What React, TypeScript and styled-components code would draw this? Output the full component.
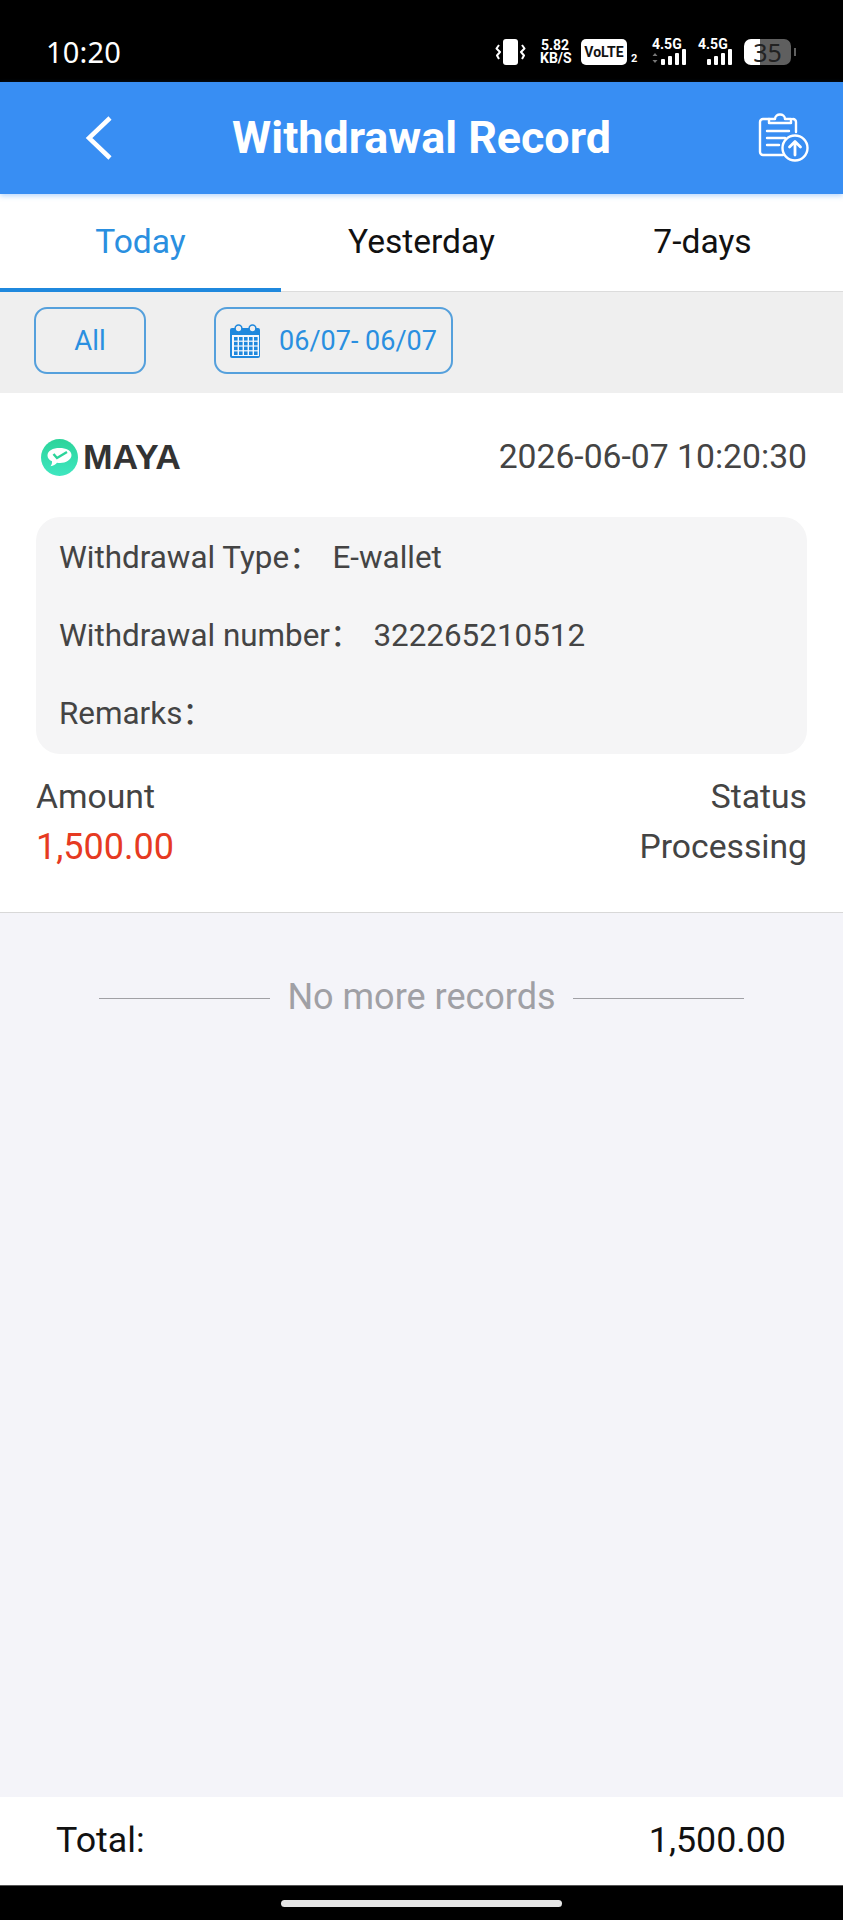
import React from "react";
import styled, { createGlobalStyle } from "styled-components";

const Global = createGlobalStyle`
  html, body { margin: 0; padding: 0; background: #000; }
  body { font-family: Roboto, "Noto Sans CJK SC", "Liberation Sans", sans-serif; }
  * { box-sizing: border-box; }
`;

const BODY_FONT = `Roboto, "Noto Sans CJK SC", sans-serif`;

const Page = styled.div`
  width: 843px;
  height: 1920px;
  display: flex;
  flex-direction: column;
  background: #f4f4f9;
  overflow: hidden;
`;

const StatusBar = styled.div`
  height: 82px;
  flex: none;
  background: #000;
  color: #fff;
  display: flex;
  align-items: flex-end;
  justify-content: space-between;
  padding: 0 52px 13px 46px;
`;
const Clock = styled.div`
  font: 400 29px/34px "Noto Sans", Roboto, sans-serif;
  letter-spacing: 0.2px;
`;
const StatusIcons = styled.div`
  display: flex;
  align-items: flex-end;
  height: 26px;
  margin-bottom: 4px;
`;
const Speed = styled.div`
  font: 700 14px/13px Roboto, sans-serif;
  text-align: center;
  width: 30px;
  margin-left: 13px;
  margin-right: 11px;
  white-space: nowrap;
`;
const Volte = styled.div`
  width: 46px;
  height: 26px;
  border-radius: 5px;
  background: #fff;
  color: #111;
  font: 700 14px/26px Roboto, sans-serif;
  text-align: center;
`;
const SimNum = styled.span`
  width: 6px;
  font: 700 11px/12px Roboto, sans-serif;
  margin: 0 15px 0 4px;
`;
const Net = styled.div`
  position: relative;
  width: 34px;
  height: 26px;
  margin-right: 12px;
`;
const NetLabel = styled.span`
  position: absolute;
  left: 0;
  top: -1px;
  font: 700 14px/13px Roboto, sans-serif;
`;
const Battery = styled.div`
  position: relative;
  width: 47px;
  height: 26px;
  border-radius: 7px;
  background: linear-gradient(90deg, #fff 0 35%, #5f5f5f 35% 100%);
  color: #222;
  font: 400 25px/26px "Noto Sans", Roboto, sans-serif;
  text-align: center;
  &::after {
    content: "";
    position: absolute;
    right: -5px;
    top: 9px;
    width: 2px;
    height: 8px;
    background: #5f5f5f;
  }
`;

const Header = styled.header`
  height: 112px;
  flex: none;
  background: #388ef3;
  color: #fff;
  display: grid;
  grid-template-columns: 1fr auto 1fr;
  align-items: center;
  padding: 0 34px;
  box-shadow: 0 2px 5px rgba(56, 142, 243, 0.35);
  position: relative;
`;
const Title = styled.h1`
  margin: 0;
  font: 700 44.8px/48px Roboto, sans-serif;
`;
const HeaderAction = styled.div`
  display: flex;
  justify-content: flex-end;
`;
const HeaderBack = styled.div`
  display: flex;
  justify-content: flex-start;
  padding-left: 50px;
`;

const Tabs = styled.nav`
  height: 98px;
  flex: none;
  background: #fff;
  display: grid;
  grid-template-columns: repeat(3, 1fr);
  border-bottom: 1px solid #dcdcdc;
`;
const Tab = styled.div<{ $active?: boolean }>`
  display: flex;
  align-items: center;
  justify-content: center;
  font: 400 33.6px/40px Roboto, sans-serif;
  color: ${(p) => (p.$active ? "#2a8fe0" : "#111")};
  height: 98px;
  padding-top: 2px;
  border-bottom: 4px solid ${(p) => (p.$active ? "#1f88dd" : "transparent")};
`;

const FilterBar = styled.div`
  height: 101px;
  flex: none;
  background: #efefef;
  display: flex;
  align-items: center;
  gap: 68px;
  padding: 0 0 4px 34px;
`;
const FilterButton = styled.div<{ $wide?: boolean }>`
  height: 67px;
  width: ${(p) => (p.$wide ? "239px" : "112px")};
  border: 2px solid #55a0dc;
  border-radius: 13px;
  color: #2a8fe0;
  font: 400 ${(p) => (p.$wide ? 27 : 27.5)}px/34px Roboto, sans-serif;
  display: flex;
  align-items: center;
  justify-content: center;
  gap: 18px;
`;

const Card = styled.section`
  height: 520px;
  flex: none;
  background: #fff;
  border-bottom: 1px solid #d8d8d8;
  padding: 40px 36px 0;
`;
const CardHead = styled.div`
  display: flex;
  align-items: center;
  justify-content: space-between;
  height: 48px;
  padding-left: 5px;
`;
const Brand = styled.div`
  display: flex;
  align-items: center;
  gap: 5px;
  font: 700 35.5px/40px "Liberation Sans", sans-serif;
  color: #333;
`;
const Stamp = styled.div`
  font: 400 33.7px/40px Roboto, sans-serif;
  color: #444;
`;
const InfoBox = styled.div`
  margin-top: 36px;
  height: 237px;
  background: #f5f5f6;
  border-radius: 24px;
  padding: 2px 23px 0;
`;
const InfoLine = styled.div`
  height: 78px;
  display: flex;
  align-items: center;
  font: 400 31.4px/40px ${BODY_FONT};
  color: #444;
`;
const InfoValue = styled.span`
  margin-left: 12px;
`;
const Summary = styled.div`
  display: grid;
  grid-template-columns: 1fr 1fr;
  margin-top: 23px;
  row-gap: 10px;
`;
const SummaryCell = styled.div<{ $end?: boolean; $tone?: string; $size?: number }>`
  font: 400 ${(p) => p.$size || 33.7}px/40px Roboto, sans-serif;
  color: ${(p) => p.$tone || "#444"};
  text-align: ${(p) => (p.$end ? "right" : "left")};
`;

const Content = styled.main`
  flex: 1;
  padding-top: 64px;
`;
const EndNote = styled.div`
  display: flex;
  align-items: center;
  justify-content: center;
  gap: 17px;
  color: #a0a0a5;
  font: 400 36px/40px Roboto, sans-serif;
  &::before,
  &::after {
    content: "";
    width: 171px;
    height: 1.5px;
    background: #a0a0a5;
    margin-top: 3px;
  }
`;

const Footer = styled.footer`
  height: 88px;
  flex: none;
  background: #fff;
  color: #111;
  display: flex;
  align-items: center;
  justify-content: space-between;
  padding: 0 57px 2px 56px;
  font: 400 35.8px/40px Roboto, sans-serif;
`;
const NavBar = styled.div`
  height: 35px;
  flex: none;
  background: #000;
  border-top: 1px solid #555;
  display: flex;
  justify-content: center;
  padding-top: 14px;
`;
const HomePill = styled.div`
  width: 281px;
  height: 7px;
  border-radius: 4px;
  background: #e6e6e6;
`;

const VibrateIcon = () => (
  <svg width="32" height="26" viewBox="0 0 32 26" fill="none">
    <rect x="8" y="0" width="15" height="26" rx="3" fill="#fff" />
    <path d="M4 6l-2.500 3.500L5 13l-3 3.500 2 3.500M27 6l2.500 3.500L26 13l3 3.500-2 3.500" stroke="#fff" strokeWidth="2" strokeLinejoin="round" />
  </svg>
);
const Bars = ({ arrows }: { arrows?: boolean }) => (
  <svg width="34" height="16" viewBox="0 0 34 16" style={{ position: "absolute", left: 0, bottom: 0 }}>
    {arrows && <path d="M0.500 7l2.500-3 2.500 3zM0.500 11l2.500 3 2.500-3z" fill="#777" />}
    <rect x="9" y="10" width="4" height="6" rx="1" fill="#fff" />
    <rect x="16" y="7" width="4" height="9" rx="1" fill="#fff" />
    <rect x="23" y="4" width="4" height="12" rx="1" fill="#fff" />
    <rect x="30" y="0" width="4" height="16" rx="1" fill="#fff" />
  </svg>
);
const BackIcon = () => (
  <svg width="30" height="46" viewBox="0 0 30 46" fill="none">
    <path d="M26 3L5 23l21 20" stroke="#fff" strokeWidth="4.5" />
  </svg>
);
const RecordIcon = () => (
  <svg width="52" height="50" viewBox="0 0 52 50" fill="none" stroke="#fff" strokeWidth="2.4" strokeLinecap="round" strokeLinejoin="round">
    <path d="M12 6H6a3 3 0 0 0-3 3v30a3 3 0 0 0 3 3h20M36 6a3 3 0 0 1 3 3v10" />
    <path d="M12 10V6h6c0-6 10-6 10 0h6v4z" />
    <path d="M10 18h22M10 25h18M10 32h12" />
    <circle cx="38" cy="35" r="12.500" />
    <path d="M38 42V29M32.500 34l5.500-5.500 5.500 5.500" strokeWidth="2.800" />
  </svg>
);
const CalendarIcon = () => (
  <svg width="31" height="34" viewBox="0 0 31 34">
    <path d="M2 4h26a2 2 0 0 1 2 2v26a2 2 0 0 1-2 2H2a2 2 0 0 1-2-2V6a2 2 0 0 1 2-2z" fill="#1f88dd" />
    <circle cx="8.500" cy="4.500" r="3.400" fill="#efefef" stroke="#1f88dd" strokeWidth="1.500" />
    <circle cx="22.500" cy="4.500" r="3.400" fill="#efefef" stroke="#1f88dd" strokeWidth="1.500" />
    <rect x="2" y="11" width="27" height="21" fill="#f6f9fd" />
    {[13, 17.8, 22.6, 27.4].map((y) =>
      [4, 9, 14, 19, 24].map((x) => <rect key={`${x}-${y}`} x={x} y={y} width="3.600" height="3.600" fill="#1f88dd" />)
    )}
  </svg>
);
const MayaLogo = () => (
  <svg width="37" height="37" viewBox="0 0 37 37">
    <defs>
      <linearGradient id="mayaG" x1="0" y1="0" x2="0" y2="1">
        <stop offset="0" stopColor="#2bd49a" />
        <stop offset="1" stopColor="#3fe6c0" />
      </linearGradient>
    </defs>
    <circle cx="18.500" cy="18.500" r="18.500" fill="url(#mayaG)" />
    <path d="M6.500 16.500c0-5 5.500-7.500 12-7.500s12 2.500 12 7S25 24 19 24c-1 0-2 0-3-.3-1.500 1.800-3.500 3.300-6.500 3.500 1.200-1.500 1.800-3.200 1.500-5C8 21 6.500 19 6.500 16.500z" fill="#fff" />
    <path d="M12.500 15l3.500 4 10-6" stroke="#2bd49a" strokeWidth="2.400" fill="none" />
  </svg>
);

export default function App() {
  return (
    <Page>
      <Global />
      <StatusBar>
        <Clock>10:20</Clock>
        <StatusIcons>
          <VibrateIcon />
          <Speed>
            5.82
            <br />
            KB/S
          </Speed>
          <Volte>VoLTE</Volte>
          <SimNum>2</SimNum>
          <Net>
            <NetLabel>4.5G</NetLabel>
            <Bars arrows />
          </Net>
          <Net>
            <NetLabel>4.5G</NetLabel>
            <Bars />
          </Net>
          <Battery>35</Battery>
        </StatusIcons>
      </StatusBar>
      <Header>
        <HeaderBack>
          <BackIcon />
        </HeaderBack>
        <Title>Withdrawal Record</Title>
        <HeaderAction>
          <RecordIcon />
        </HeaderAction>
      </Header>
      <Tabs>
        <Tab $active>Today</Tab>
        <Tab>Yesterday</Tab>
        <Tab>7-days</Tab>
      </Tabs>
      <FilterBar>
        <FilterButton>All</FilterButton>
        <FilterButton $wide>
          <CalendarIcon />
          06/07- 06/07
        </FilterButton>
      </FilterBar>
      <Card>
        <CardHead>
          <Brand>
            <MayaLogo />
            MAYA
          </Brand>
          <Stamp>2026-06-07 10:20:30</Stamp>
        </CardHead>
        <InfoBox>
          <InfoLine>
            Withdrawal Type：<InfoValue>E-wallet</InfoValue>
          </InfoLine>
          <InfoLine>
            Withdrawal number：<InfoValue>322265210512</InfoValue>
          </InfoLine>
          <InfoLine>Remarks：</InfoLine>
        </InfoBox>
        <Summary>
          <SummaryCell>Amount</SummaryCell>
          <SummaryCell $end>Status</SummaryCell>
          <SummaryCell $tone="#e63a22" $size={36}>
            1,500.00
          </SummaryCell>
          <SummaryCell $end>Processing</SummaryCell>
        </Summary>
      </Card>
      <Content>
        <EndNote>No more records</EndNote>
      </Content>
      <Footer>
        <span>Total:</span>
        <span>1,500.00</span>
      </Footer>
      <NavBar>
        <HomePill />
      </NavBar>
    </Page>
  );
}
